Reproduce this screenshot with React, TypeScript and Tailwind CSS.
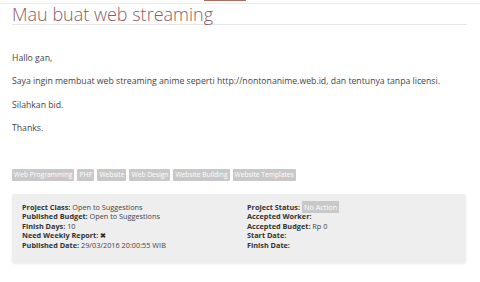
import React from "react";

const tags = ["Web Programming", "PHP", "Website", "Web Design", "Website Building", "Website Templates"];

export default function App() {
  return (
    <div className="w-[480px] h-[282px] bg-white overflow-hidden relative" style={{ fontFamily: '"Open Sans", sans-serif' }}>
      <div className="h-[4px] border-b border-[#ececec] relative">
        <div className="absolute left-[204px] top-0 w-[42px] h-[1px] bg-[#a07060]" />
      </div>
      <div className="px-[12px]">
        <h1 className="text-[18px] font-light leading-[19px] text-[#8a5c60] border-b border-[#e6e6e6] pt-[1px] pb-[0px] w-[455px]">
          Mau buat web streaming
        </h1>
        <div className="text-[8.7px] text-[#444] leading-[12px] pt-[27px]">
          <p>Hallo gan,</p>
          <p className="mt-[11.3px]">Saya ingin membuat web streaming anime seperti http://nontonanime.web.id, dan tentunya tanpa licensi.</p>
          <p className="mt-[11.3px]">Silahkan bid.</p>
          <p className="mt-[11.3px]">Thanks.</p>
        </div>
        <div className="flex gap-[3px] mt-[35px]">
          {tags.map((t) => (
            <span key={t} className="bg-[#c8c8c8] text-white text-[6.7px] leading-[12px] h-[12px] px-[2px] rounded-[1px]">
              {t}
            </span>
          ))}
        </div>
        <div className="mt-[13px] w-[454px] h-[69px] bg-[#eeeeee] shadow-[0_1px_2px_rgba(0,0,0,0.08)] rounded-[2px] flex pl-[10px] pt-[9px] text-[7.3px] leading-[9.5px] text-[#444]">
          <div className="w-[225px]">
            <div><b className="text-[#333]">Project Class:</b> Open to Suggestions</div>
            <div><b className="text-[#333]">Published Budget:</b> Open to Suggestions</div>
            <div><b className="text-[#333]">Finish Days:</b> 10</div>
            <div><b className="text-[#333]">Need Weekly Report:</b> <b className="text-[#333]">✖</b></div>
            <div><b className="text-[#333]">Published Date:</b> 29/03/2016 20:00:55 WIB</div>
          </div>
          <div>
            <div><b className="text-[#333]">Project Status:</b> <span className="bg-[#c8c8c8] text-white px-[2px] py-[1px]">No Action</span></div>
            <div><b className="text-[#333]">Accepted Worker:</b></div>
            <div><b className="text-[#333]">Accepted Budget:</b> Rp 0</div>
            <div><b className="text-[#333]">Start Date:</b></div>
            <div><b className="text-[#333]">Finish Date:</b></div>
          </div>
        </div>
      </div>
    </div>
  );
}
